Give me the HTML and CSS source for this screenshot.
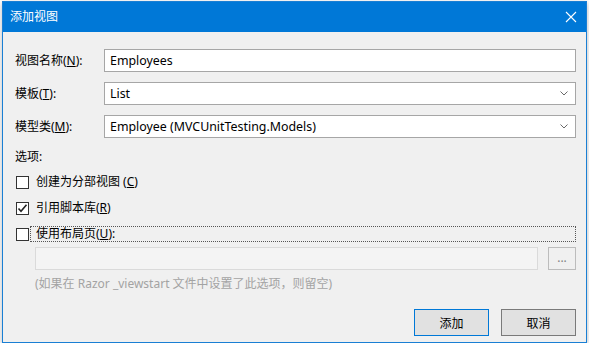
FILE: index.html
```html
<!DOCTYPE html>
<html lang="zh-CN">
<head>
    <meta charset="UTF-8">
    <title>添加视图</title>
    <link rel="stylesheet" href="styles.css">
</head>
<body>
    <div class="dialog">
        <div class="titlebar">
            <span class="title">添加视图</span>
            <svg class="close" width="12" height="12" viewBox="0 0 12 12">
                <path d="M1 1 L11 11 M11 1 L1 11" stroke="#fff" stroke-width="1.1" fill="none"/>
            </svg>
        </div>
        <div class="content">
            <div class="field">
                <label>视图名称(<u>N</u>):</label>
                <div class="input">Employees</div>
            </div>
            <div class="field">
                <label>模板(<u>T</u>):</label>
                <div class="input select">
                    <span>List</span>
                    <svg class="chevron" width="8" height="5" viewBox="0 0 8 5"><path d="M0.5 0.5 L4 4 L7.5 0.5" stroke="#6a6a6a" fill="none"/></svg>
                </div>
            </div>
            <div class="field">
                <label>模型类(<u>M</u>):</label>
                <div class="input select">
                    <span>Employee (MVCUnitTesting.Models)</span>
                    <svg class="chevron" width="8" height="5" viewBox="0 0 8 5"><path d="M0.5 0.5 L4 4 L7.5 0.5" stroke="#6a6a6a" fill="none"/></svg>
                </div>
            </div>

            <div class="section">选项:</div>

            <div class="check">
                <span class="box"></span>
                <span class="text">创建为分部视图 (<u>C</u>)</span>
            </div>
            <div class="check">
                <span class="box">
                    <svg width="11" height="11" viewBox="0 0 11 11"><path d="M1.5 5.5 L4 8.2 L9.5 1.8" stroke="#222" stroke-width="1.6" fill="none"/></svg>
                </span>
                <span class="text">引用脚本库(<u>R</u>)</span>
            </div>
            <div class="check">
                <span class="box"></span>
                <span class="text focused">使用布局页(<u>U</u>):</span>
            </div>

            <div class="path-row">
                <div class="input disabled"></div>
                <div class="browse">...</div>
            </div>
            <div class="hint">(如果在 Razor _viewstart 文件中设置了此选项，则留空)</div>

            <div class="buttons">
                <button class="btn default">添加</button>
                <button class="btn">取消</button>
            </div>
        </div>
    </div>
</body>
</html>
```

FILE: styles.css
```css
body {
    margin: 0;
    padding: 1px 0 0 2px;
    background-color: #ffffff;
    font-family: "Noto Sans", "Noto Sans CJK SC", sans-serif;
    font-size: 12px;
    color: #000;
}
.dialog {
    width: 585px;
    height: 342px;
    box-sizing: border-box;
    border: 1px solid #1a7fd4;
    background-color: #f0f0f0;
    box-shadow: 0 2px 6px rgba(0, 0, 0, 0.28);
    display: flex;
    flex-direction: column;
}
.titlebar {
    height: 30px;
    background-color: #0078d7;
    color: #fff;
    display: flex;
    align-items: center;
    justify-content: space-between;
    padding: 0 9px 0 7px;
}
.title {
    font-size: 12px;
    line-height: 16px;
}
.close {
    display: block;
}
.content {
    padding: 17px 10px 0 12px;
    display: flex;
    flex-direction: column;
}
.field {
    display: flex;
    align-items: center;
    height: 23px;
    margin-bottom: 10px;
}
.field label {
    width: 89px;
    line-height: 16px;
}
.input {
    flex: 1;
    height: 23px;
    box-sizing: border-box;
    border: 1px solid #a6a6a6;
    background-color: #fff;
    padding: 0 5px;
    line-height: 21px;
    font-size: 12.4px;
    display: flex;
    align-items: center;
}
.select {
    justify-content: space-between;
    padding-right: 7px;
}
.chevron {
    display: block;
}
.section {
    line-height: 16px;
    margin-top: 1px;
}
.check {
    display: flex;
    align-items: center;
    height: 16px;
    margin-top: 10px;
}
.section + .check {
    margin-top: 9px;
}
.box {
    width: 13px;
    height: 13px;
    box-sizing: border-box;
    border: 1px solid #333;
    background-color: #fff;
    margin-left: 1px;
    display: flex;
    align-items: center;
    justify-content: center;
}
.box svg {
    display: block;
}
.text {
    padding-left: 6px;
    line-height: 14px;
    margin-left: 1px;
}
.focused {
    flex: 1;
    border: 1px dotted #555;
    padding-left: 5px;
}
.path-row {
    display: flex;
    margin: 5px 0 0 20px;
    gap: 10px;
}
.disabled {
    background-color: #f4f4f4;
    border-color: #dadada;
}
.browse {
    width: 28px;
    height: 23px;
    box-sizing: border-box;
    border: 1px solid #bcbcbc;
    background-color: #f0f0f0;
    color: #838383;
    text-align: center;
    line-height: 19px;
}
.hint {
    margin: 6px 0 0 20px;
    line-height: 16px;
    color: #a3a3a3;
}
.buttons {
    display: flex;
    justify-content: flex-end;
    gap: 12px;
    margin-top: 17px;
}
.btn {
    width: 75px;
    height: 27px;
    box-sizing: border-box;
    border: 1px solid #7a7a7a;
    background-color: #e1e1e1;
    font-family: "Noto Sans", "Noto Sans CJK SC", sans-serif;
    font-size: 12px;
    color: #000;
    padding: 0;
}
.btn.default {
    border-color: #0078d7;
}
```
